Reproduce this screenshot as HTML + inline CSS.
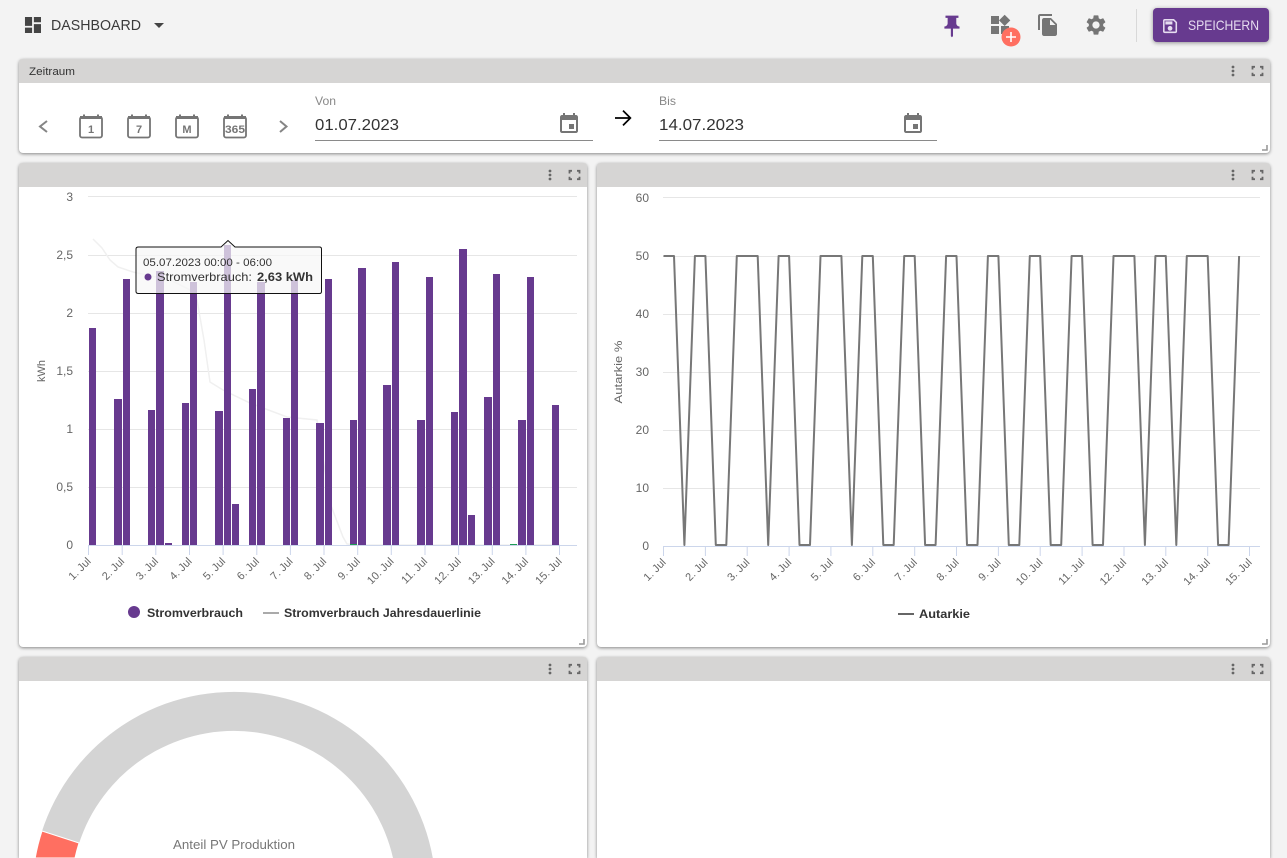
<!DOCTYPE html>
<html lang="de"><head><meta charset="utf-8"><title>Dashboard</title>
<style>
html,body{margin:0;padding:0;width:1287px;height:858px;overflow:hidden;background:#f3f3f3;font-family:"Liberation Sans",sans-serif}
#w{position:absolute;left:0;top:0;width:1287px;height:858px;overflow:hidden}
.p{position:absolute;background:#fff;border-radius:4px;box-shadow:0 1px 3px rgba(0,0,0,.45)}
.b{border-radius:4px 4px 0 0}
.h{position:absolute;left:0;right:0;top:0;height:24px;background:#d6d5d4;border-radius:3px 3px 0 0}
svg{position:absolute;left:0;top:0}
text{font-family:"Liberation Sans",sans-serif}
</style></head><body><div id="w">
<div class="p" style="left:19px;top:59px;width:1251px;height:94px"><div class="h"></div></div>
<div class="p" style="left:19px;top:163px;width:568px;height:484px"><div class="h"></div></div>
<div class="p" style="left:597px;top:163px;width:673px;height:484px"><div class="h"></div></div>
<div class="p b" style="left:19px;top:657px;width:568px;height:201px"><div class="h"></div></div>
<div class="p b" style="left:597px;top:657px;width:673px;height:201px"><div class="h"></div></div>
<svg width="1287" height="858" viewBox="0 0 1287 858">
<defs>
<g id="hd"><circle cx="0" cy="-4" r="1.4" fill="#666"/><circle cx="0" cy="0" r="1.4" fill="#666"/><circle cx="0" cy="4" r="1.4" fill="#666"/>
<path d="M19.5 -1.500V-4.200H22M27 -4.200H29.500V-1.500M29.500 1.800V4.200H27M22 4.200H19.500V1.800" fill="none" stroke="#666" stroke-width="1.8"/></g>
<path id="rs" d="M5 0V5H0" fill="none" stroke="#999" stroke-width="1.6"/>
<g id="cal"><rect x="1" y="3" width="22" height="20.5" rx="2" fill="none" stroke="#757575" stroke-width="1.8"/><rect x="1" y="2" width="22" height="3" fill="#757575"/><rect x="4" y="0.500" width="2" height="2.500" fill="#757575"/><rect x="18" y="0.500" width="2" height="2.500" fill="#757575"/></g>
<path id="ev" fill="#757575" d="M17 12h-5v5h5v-5zM16 1v2H8V1H6v2H5c-1.11 0-1.99.9-1.99 2L3 19c0 1.1.89 2 2 2h14c1.1 0 2-.9 2-2V5c0-1.1-.9-2-2-2h-1V1h-2zm3 18H5V8h14v11z"/>
</defs>

<!-- top bar -->
<path transform="translate(22.3 14.3) scale(.89)" fill="#444" d="M3 13h8V3H3v10zm0 8h8v-6H3v6zm10 0h8V11h-8v10zm0-18v6h8V3h-8z"/>
<text x="51" y="30" font-size="15" fill="#3a3a3a" textLength="90" lengthAdjust="spacingAndGlyphs">DASHBOARD</text>
<polygon points="154,23 164,23 159,28" fill="#444"/>
<path transform="translate(939 13.5) scale(1.08)" fill="#673a8f" d="M16 9V4h2V2H6v2h2v5c0 1.66-1.34 3-3 3v2h5.97v7l1 1 1-1v-7H19v-2c-1.66 0-3-1.34-3-3z"/>
<path transform="translate(988 13)" fill="#757575" d="M13 13v8h8v-8h-8zM3 21h8v-8H3v8zM3 3v8h8V3H3zm13.66-1.31L11 7.34 16.66 13l5.66-5.66-5.66-5.65z"/>
<circle cx="1011" cy="37" r="9.5" fill="#ff6f61"/>
<path d="M1011 32v10M1006 37h10" stroke="#fff" stroke-width="1.6"/>
<path transform="translate(1036 13)" fill="#757575" d="M16 1H4c-1.1 0-2 .9-2 2v14h2V3h12V1zm-1 4l6 6v10c0 1.1-.9 2-2 2H7.99C6.89 23 6 22.1 6 21l.01-14c0-1.1.89-2 1.99-2h7zm-1 7h5.5L14 6.5V12z"/>
<path transform="translate(1084 13)" fill="#757575" d="M19.14 12.94c.04-.3.06-.61.06-.94 0-.32-.02-.64-.07-.94l2.03-1.58c.18-.14.23-.41.12-.61l-1.92-3.32c-.12-.22-.37-.29-.59-.22l-2.39.96c-.5-.38-1.03-.7-1.62-.94l-.36-2.54c-.04-.24-.24-.41-.48-.41h-3.84c-.24 0-.43.17-.47.41l-.36 2.54c-.59.24-1.13.57-1.62.94l-2.39-.96c-.22-.08-.47 0-.59.22L2.74 8.87c-.12.21-.08.47.12.61l2.03 1.58c-.05.3-.09.63-.09.94s.02.64.07.94l-2.03 1.58c-.18.14-.23.41-.12.61l1.92 3.32c.12.22.37.29.59.22l2.39-.96c.5.38 1.03.7 1.62.94l.36 2.54c.05.24.24.41.48.41h3.84c.24 0 .44-.17.47-.41l.36-2.54c.59-.24 1.13-.56 1.62-.94l2.39.96c.22.08.47 0 .59-.22l1.92-3.32c.12-.22.07-.47-.12-.61l-2.01-1.58zM12 15.6c-1.98 0-3.6-1.62-3.6-3.6s1.62-3.6 3.6-3.6 3.6 1.62 3.6 3.6-1.62 3.6-3.6 3.6z"/>
<rect x="1136" y="9" width="1" height="33" fill="#d8d8d8"/>
<rect x="1153" y="8" width="116" height="34" rx="4" fill="#673a8f" style="filter:drop-shadow(0 1px 2px rgba(0,0,0,.4))"/>
<path transform="translate(1160.7 16.7) scale(.78)" fill="#e6dcf0" d="M17 3H5c-1.11 0-2 .9-2 2v14c0 1.1.89 2 2 2h14c1.1 0 2-.9 2-2V7l-4-4zm2 16H5V5h11.17L19 7.83V19zm-7-7c-1.66 0-3 1.34-3 3s1.34 3 3 3 3-1.34 3-3-1.34-3-3-3zM6 6h9v4H6z"/>
<text x="1188" y="30" font-size="14" fill="#e6dcf0" textLength="71" lengthAdjust="spacingAndGlyphs">SPEICHERN</text>

<!-- panel header icons -->
<use href="#hd" x="1233" y="71"/><use href="#hd" x="550" y="175"/><use href="#hd" x="1233" y="175"/><use href="#hd" x="550" y="669"/><use href="#hd" x="1233" y="669"/>
<use href="#rs" x="1262" y="145"/><use href="#rs" x="579" y="639"/><use href="#rs" x="1262" y="639"/>
<text x="29" y="75" font-size="11" fill="#333" textLength="46" lengthAdjust="spacingAndGlyphs">Zeitraum</text>

<!-- Zeitraum -->
<polyline points="47,121 40,126.5 47,132" fill="none" stroke="#858585" stroke-width="2"/>
<polyline points="280,121 286.5,126.5 280,132" fill="none" stroke="#858585" stroke-width="2"/>
<use href="#cal" x="79" y="114"/><use href="#cal" x="127" y="114"/><use href="#cal" x="175" y="114"/><use href="#cal" x="223" y="114"/>
<g font-size="11" font-weight="bold" fill="#757575" text-anchor="middle">
<text x="91" y="133">1</text><text x="139" y="133">7</text><text x="187" y="133">M</text><text x="235" y="133" textLength="20" lengthAdjust="spacingAndGlyphs">365</text></g>
<text x="315" y="105" font-size="12" fill="#888" textLength="21" lengthAdjust="spacingAndGlyphs">Von</text>
<text x="315" y="130" font-size="16" fill="#333" textLength="84" lengthAdjust="spacingAndGlyphs">01.07.2023</text>
<rect x="315" y="140" width="278" height="1" fill="#8a8a8a"/>
<use href="#ev" x="557" y="112"/>
<path d="M615 118H630M623 110.600L630.400 118L623 125.400" fill="none" stroke="#000" stroke-width="1.7"/>
<text x="659" y="105" font-size="12" fill="#888" textLength="17" lengthAdjust="spacingAndGlyphs">Bis</text>
<text x="659" y="130" font-size="16" fill="#333" textLength="85" lengthAdjust="spacingAndGlyphs">14.07.2023</text>
<rect x="659" y="140" width="278" height="1" fill="#8a8a8a"/>
<use href="#ev" x="901" y="112"/>

<!-- chart 1 -->
<path d="M88 196.500H577M88 255.500H577M88 313.500H577M88 371.500H577M88 429.500H577M88 487.500H577" stroke="#e6e6e6" fill="none"/>
<path d="M93 239L102 248L110 260L118 267L133 272L170 280L190 290L197 300L204 340L210 382L223 390L250 403L287 417L317 420L330 503L343 537L347 544L360 545H560" fill="none" stroke="#f0f0f0" stroke-width="1.5"/>
<g fill="#673a8f">
<rect x="89" y="328" width="7" height="217"/><rect x="114" y="399" width="8" height="146"/><rect x="123" y="279" width="7" height="266"/>
<rect x="148" y="410" width="7" height="135"/><rect x="156" y="271" width="8" height="274"/><rect x="165" y="543" width="7" height="2"/>
<rect x="182" y="403" width="7" height="142"/><rect x="190" y="282" width="7" height="263"/><rect x="215" y="411" width="8" height="134"/>
<rect x="224" y="245" width="7" height="300"/><rect x="232" y="504" width="7" height="41"/><rect x="249" y="389" width="7" height="156"/>
<rect x="257" y="282" width="8" height="263"/><rect x="283" y="418" width="7" height="127"/><rect x="291" y="280" width="7" height="265"/>
<rect x="316" y="423" width="8" height="122"/><rect x="325" y="279" width="7" height="266"/><rect x="350" y="420" width="7" height="125"/>
<rect x="358" y="268" width="8" height="277"/><rect x="383" y="385" width="8" height="160"/><rect x="392" y="262" width="7" height="283"/>
<rect x="417" y="420" width="8" height="125"/><rect x="426" y="277" width="7" height="268"/><rect x="451" y="412" width="7" height="133"/>
<rect x="459" y="249" width="8" height="296"/><rect x="468" y="515" width="7" height="30"/><rect x="484" y="397" width="8" height="148"/>
<rect x="493" y="274" width="7" height="271"/><rect x="518" y="420" width="8" height="125"/><rect x="527" y="277" width="7" height="268"/><rect x="552" y="405" width="7" height="140"/>
</g>
<rect x="350" y="544" width="7" height="1" fill="#1f9d55"/><rect x="510" y="544" width="7" height="1" fill="#1f9d55"/>
<path d="M88.500 545.500H577M88.500 545V555M122.200 545V555M155.800 545V555M189.500 545V555M223.100 545V555M256.800 545V555M290.400 545V555M324 545V555M357.700 545V555M391.300 545V555M425 545V555M458.600 545V555M492.300 545V555M525.900 545V555M559.500 545V555" stroke="#ccd6eb" fill="none"/>
<g font-size="12" fill="#666" text-anchor="end">
<text x="73" y="201">3</text><text x="73" y="259">2,5</text><text x="73" y="317">2</text><text x="73" y="375">1,5</text><text x="73" y="433">1</text><text x="73" y="491">0,5</text><text x="73" y="549">0</text>
</g>
<g font-size="11" fill="#666" text-anchor="end">
<text transform="translate(91.500 562) rotate(-45)">1. Jul</text><text transform="translate(125 562) rotate(-45)">2. Jul</text><text transform="translate(158.800 562) rotate(-45)">3. Jul</text><text transform="translate(192.500 562) rotate(-45)">4. Jul</text><text transform="translate(226 562) rotate(-45)">5. Jul</text><text transform="translate(259.800 562) rotate(-45)">6. Jul</text><text transform="translate(293.400 562) rotate(-45)">7. Jul</text><text transform="translate(327 562) rotate(-45)">8. Jul</text><text transform="translate(360.700 562) rotate(-45)">9. Jul</text><text transform="translate(394.300 562) rotate(-45)">10. Jul</text><text transform="translate(428 562) rotate(-45)">11. Jul</text><text transform="translate(461.600 562) rotate(-45)">12. Jul</text><text transform="translate(495.300 562) rotate(-45)">13. Jul</text><text transform="translate(528.900 562) rotate(-45)">14. Jul</text><text transform="translate(562.500 562) rotate(-45)">15. Jul</text>
</g>
<text transform="translate(45 371) rotate(-90)" font-size="11" fill="#666" text-anchor="middle">kWh</text>
<circle cx="134" cy="612" r="6" fill="#673a8f"/>
<text x="147" y="617" font-size="12" font-weight="bold" fill="#333" textLength="96" lengthAdjust="spacingAndGlyphs">Stromverbrauch</text>
<rect x="263" y="612" width="16" height="2" fill="#aaa"/>
<text x="284" y="617" font-size="12" font-weight="bold" fill="#333" textLength="197" lengthAdjust="spacingAndGlyphs">Stromverbrauch Jahresdauerlinie</text>
<!-- tooltip -->
<path d="M138.500 247H221L228 240.500L235 247H319.500Q321.500 247 321.500 249V291.500Q321.500 293.500 319.500 293.500H138.500Q136 293.500 136 291.500V249Q136 247 138.500 247Z" fill="rgba(247,247,247,.72)" stroke="#111" stroke-width="1"/>
<text x="143" y="266" font-size="11" fill="#333" textLength="129" lengthAdjust="spacingAndGlyphs">05.07.2023 00:00 - 06:00</text>
<circle cx="148" cy="277" r="3.500" fill="#673a8f"/>
<text x="157" y="281" font-size="12" fill="#333" textLength="95" lengthAdjust="spacingAndGlyphs">Stromverbrauch:</text>
<text x="257" y="281" font-size="12" font-weight="bold" fill="#333" textLength="56" lengthAdjust="spacingAndGlyphs">2,63 kWh</text>

<!-- chart 2 -->
<path d="M663 197.500H1260M663 256.500H1260M663 314.500H1260M663 372.500H1260M663 430.500H1260M663 488.500H1260" stroke="#e6e6e6" fill="none"/>
<path d="M663.500 546.500H1260M663.500 546V556M705.400 546V556M747.200 546V556M789.100 546V556M830.900 546V556M872.800 546V556M914.700 546V556M956.500 546V556M998.400 546V556M1040.200 546V556M1082.100 546V556M1124 546V556M1165.800 546V556M1207.700 546V556M1249.500 546V556" stroke="#ccd6eb" fill="none"/>
<polyline fill="none" stroke="#777" stroke-width="2" stroke-linejoin="round" points="663.500,256 674,256 684.400,545 694.900,256 705.400,256 715.800,545 726.300,545 736.800,256 747.200,256 757.700,256 768.200,545 778.600,256 789.100,256 799.500,545 810,545 820.500,256 830.900,256 841.400,256 851.900,545 862.300,256 872.800,256 883.300,545 893.700,545 904.200,256 914.700,256 925.100,545 935.600,545 946.100,256 956.500,256 967,545 977.500,545 987.900,256 998.400,256 1008.800,545 1019.300,545 1029.800,256 1040.200,256 1050.700,545 1061.200,545 1071.600,256 1082.100,256 1092.600,545 1103,545 1113.500,256 1124,256 1134.400,256 1144.900,545 1155.400,256 1165.800,256 1176.300,545 1186.800,256 1197.200,256 1207.700,256 1218.100,545 1228.600,545 1239.100,256"/>
<g font-size="12" fill="#666" text-anchor="end">
<text x="649" y="202">60</text><text x="649" y="260">50</text><text x="649" y="318">40</text><text x="649" y="376">30</text><text x="649" y="434">20</text><text x="649" y="492">10</text><text x="649" y="550">0</text>
</g>
<g font-size="11" fill="#666" text-anchor="end">
<text transform="translate(666.500 563) rotate(-45)">1. Jul</text><text transform="translate(708.400 563) rotate(-45)">2. Jul</text><text transform="translate(750.200 563) rotate(-45)">3. Jul</text><text transform="translate(792.100 563) rotate(-45)">4. Jul</text><text transform="translate(833.900 563) rotate(-45)">5. Jul</text><text transform="translate(875.800 563) rotate(-45)">6. Jul</text><text transform="translate(917.700 563) rotate(-45)">7. Jul</text><text transform="translate(959.500 563) rotate(-45)">8. Jul</text><text transform="translate(1001.400 563) rotate(-45)">9. Jul</text><text transform="translate(1043.200 563) rotate(-45)">10. Jul</text><text transform="translate(1085.100 563) rotate(-45)">11. Jul</text><text transform="translate(1127 563) rotate(-45)">12. Jul</text><text transform="translate(1168.800 563) rotate(-45)">13. Jul</text><text transform="translate(1210.700 563) rotate(-45)">14. Jul</text><text transform="translate(1252.500 563) rotate(-45)">15. Jul</text>
</g>
<text transform="translate(622 372) rotate(-90)" font-size="11" fill="#666" text-anchor="middle" textLength="63" lengthAdjust="spacingAndGlyphs">Autarkie %</text>
<rect x="898" y="613" width="16" height="2" fill="#666"/>
<text x="919" y="618" font-size="12" font-weight="bold" fill="#333" textLength="51" lengthAdjust="spacingAndGlyphs">Autarkie</text>

<!-- donut -->
<path d="M35.200 858A202 202 0 0 1 432.800 858L393 858A163 163 0 0 0 75 858Z" fill="#d4d4d4"/>
<path d="M42 831A202 202 0 0 0 35.200 858L75 858A163 163 0 0 1 79 843Z" fill="#ff6f61" stroke="#fff" stroke-width="1"/>
<text x="234" y="849" font-size="13" fill="#777" text-anchor="middle" textLength="122" lengthAdjust="spacingAndGlyphs">Anteil PV Produktion</text>
</svg>
</div></body></html>
